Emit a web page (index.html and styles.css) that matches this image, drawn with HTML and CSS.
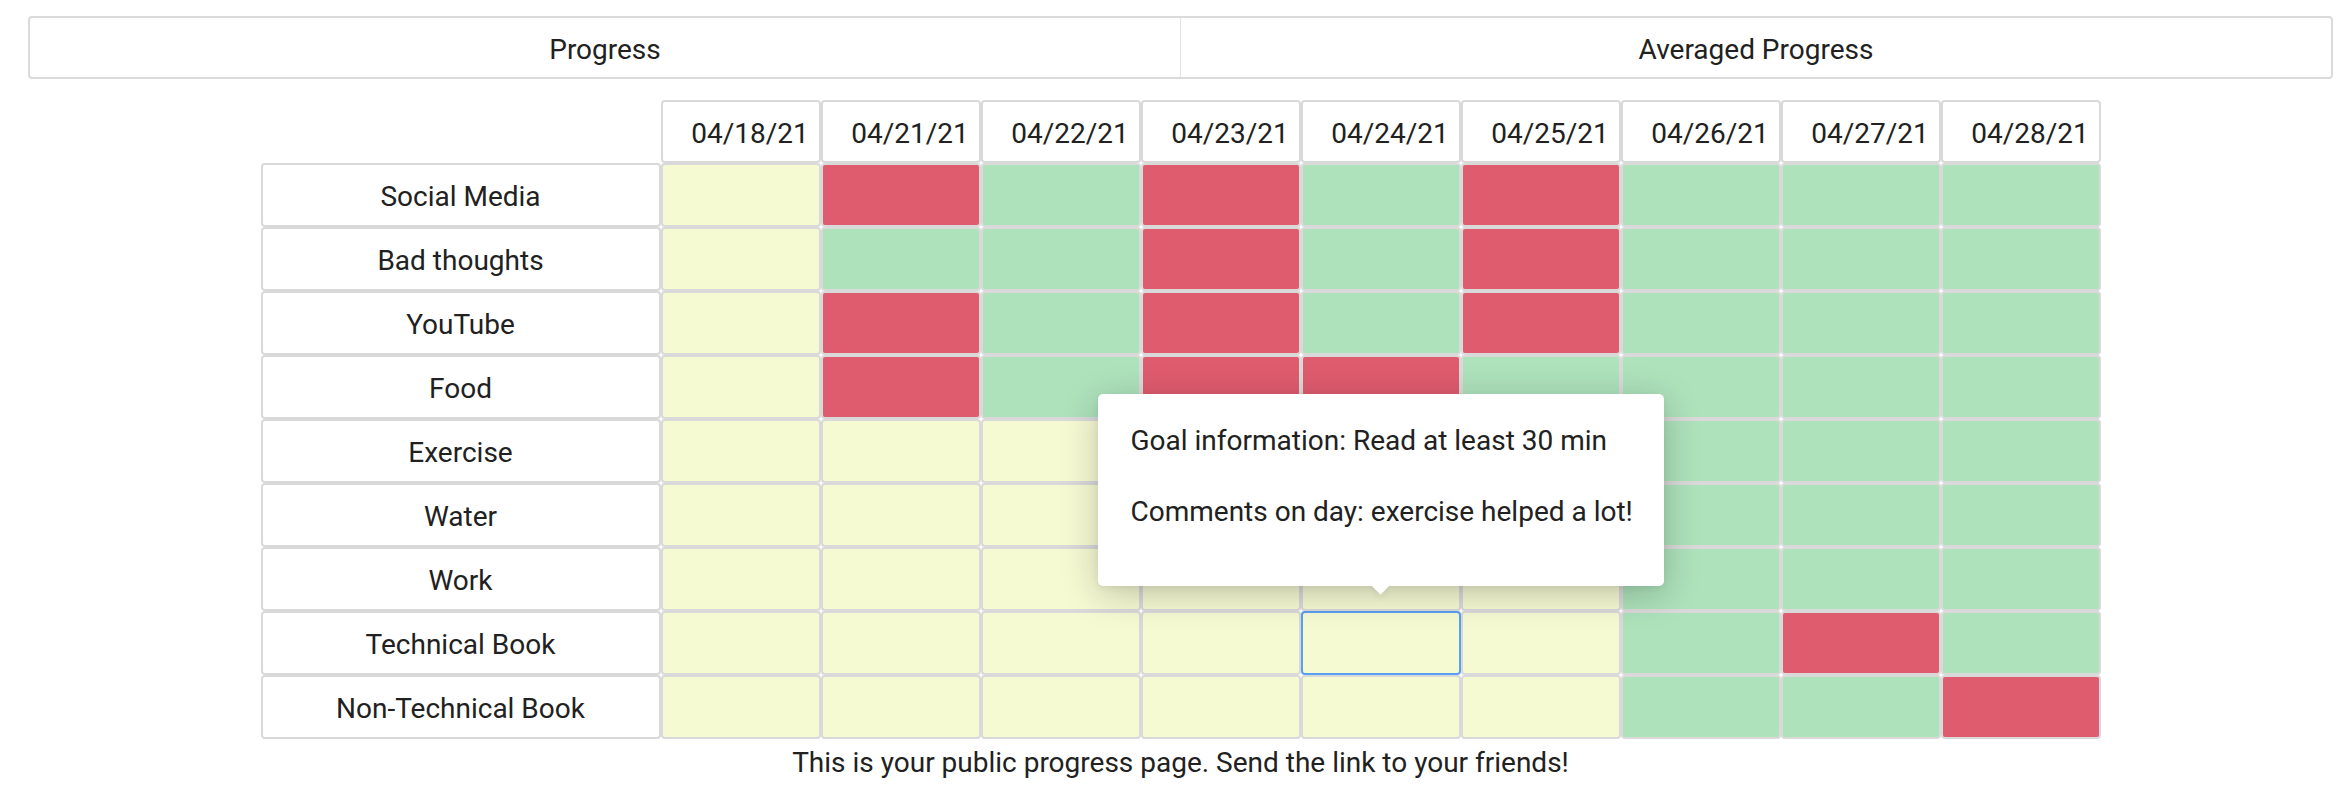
FILE: index.html
```html
<!DOCTYPE html>
<html lang="en">
<head>
<meta charset="utf-8">
<title>Public progress</title>
<link rel="stylesheet" href="styles.css">
</head>
<body>
<div class="page">
  <div class="tabs">
    <div class="tab tab-first">Progress</div>
    <div class="tab">Averaged Progress</div>
  </div>

  <div class="grid">
    <div class="corner"></div>
    <div class="date">04/18/21</div>
    <div class="date">04/21/21</div>
    <div class="date">04/22/21</div>
    <div class="date">04/23/21</div>
    <div class="date">04/24/21</div>
    <div class="date">04/25/21</div>
    <div class="date">04/26/21</div>
    <div class="date">04/27/21</div>
    <div class="date">04/28/21</div>

    <div class="label">Social Media</div>
    <div class="cell y"></div><div class="cell r"></div><div class="cell g"></div><div class="cell r"></div><div class="cell g"></div><div class="cell r"></div><div class="cell g"></div><div class="cell g"></div><div class="cell g"></div>

    <div class="label">Bad thoughts</div>
    <div class="cell y"></div><div class="cell g"></div><div class="cell g"></div><div class="cell r"></div><div class="cell g"></div><div class="cell r"></div><div class="cell g"></div><div class="cell g"></div><div class="cell g"></div>

    <div class="label">YouTube</div>
    <div class="cell y"></div><div class="cell r"></div><div class="cell g"></div><div class="cell r"></div><div class="cell g"></div><div class="cell r"></div><div class="cell g"></div><div class="cell g"></div><div class="cell g"></div>

    <div class="label">Food</div>
    <div class="cell y"></div><div class="cell r"></div><div class="cell g"></div><div class="cell r"></div><div class="cell r"></div><div class="cell g"></div><div class="cell g"></div><div class="cell g"></div><div class="cell g"></div>

    <div class="label">Exercise</div>
    <div class="cell y"></div><div class="cell y"></div><div class="cell y"></div><div class="cell y"></div><div class="cell y"></div><div class="cell y"></div><div class="cell g"></div><div class="cell g"></div><div class="cell g"></div>

    <div class="label">Water</div>
    <div class="cell y"></div><div class="cell y"></div><div class="cell y"></div><div class="cell y"></div><div class="cell y"></div><div class="cell y"></div><div class="cell g"></div><div class="cell g"></div><div class="cell g"></div>

    <div class="label">Work</div>
    <div class="cell y"></div><div class="cell y"></div><div class="cell y"></div><div class="cell y"></div><div class="cell y"></div><div class="cell y"></div><div class="cell g"></div><div class="cell g"></div><div class="cell g"></div>

    <div class="label">Technical Book</div>
    <div class="cell y"></div><div class="cell y"></div><div class="cell y"></div><div class="cell y"></div>
    <div class="cell y selected">
      <div class="tooltip">
        <p>Goal information: Read at least 30 min</p>
        <p class="second">Comments on day: exercise helped a lot!</p>
      </div>
    </div>
    <div class="cell y"></div><div class="cell g"></div><div class="cell r"></div><div class="cell g"></div>

    <div class="label">Non-Technical Book</div>
    <div class="cell y"></div><div class="cell y"></div><div class="cell y"></div><div class="cell y"></div><div class="cell y"></div><div class="cell y"></div><div class="cell g"></div><div class="cell g"></div><div class="cell r"></div>
  </div>

  <p class="note">This is your public progress page. Send the link to your friends!</p>
</div>
</body>
</html>
```

FILE: styles.css
```css
html, body {
  margin: 0;
  padding: 0;
  background: #ffffff;
}

body {
  font-family: Roboto, "Noto Sans", "Liberation Sans", sans-serif;
  font-size: 28px;
  color: #212121;
}

.page {
  margin: 16px 19px 0 28px;
}

.tabs {
  display: flex;
  height: 63px;
  box-sizing: border-box;
  border: 2px solid #dadada;
  border-radius: 4px;
}

.tab {
  flex: 1;
  display: flex;
  align-items: center;
  justify-content: center;
  padding-top: 3px;
}

.tab-first {
  border-right: 1px solid #e3e3e3;
}

.grid {
  margin-top: 21px;
  display: grid;
  grid-template-columns: 400px repeat(9, 160px);
  grid-template-rows: 63px repeat(9, 64px);
  justify-content: center;
}

.corner {
  background: transparent;
}

.date,
.label,
.cell {
  box-sizing: border-box;
  border: 2px solid #d9d9d9;
  border-radius: 4px;
}

.date {
  background: #ffffff;
  display: flex;
  align-items: center;
  justify-content: center;
  padding-left: 19px;
  padding-top: 3px;
}

.label {
  background: #ffffff;
  display: flex;
  align-items: center;
  justify-content: center;
  padding-top: 3px;
}

.cell.y { background: #f6fad3; }
.cell.g { background: #ade2bb; }
.cell.r { background: #df5b6e; }

.selected {
  position: relative;
  border-color: #5a9ff0;
}

.tooltip {
  position: absolute;
  left: 50%;
  bottom: calc(100% + 27px);
  transform: translateX(-50%);
  width: 566px;
  box-sizing: border-box;
  padding: 26px 33px 53px;
  background: #ffffff;
  border-radius: 5px;
  box-shadow: 0 8px 36px rgba(0, 0, 0, 0.22), 0 2px 6px rgba(0, 0, 0, 0.06);
  z-index: 5;
  white-space: nowrap;
}

.tooltip::after {
  content: "";
  position: absolute;
  left: 50%;
  bottom: -6px;
  width: 13px;
  height: 13px;
  margin-left: -6.5px;
  background: #ffffff;
  transform: rotate(45deg);
  box-shadow: 3px 3px 6px rgba(0, 0, 0, 0.06);
}

.tooltip p {
  margin: 0;
  line-height: 42px;
  position: relative;
  z-index: 1;
}

.tooltip p.second {
  margin-top: 29px;
}

.note {
  margin: 3px 0 0;
  text-align: center;
  line-height: 42px;
}
```
